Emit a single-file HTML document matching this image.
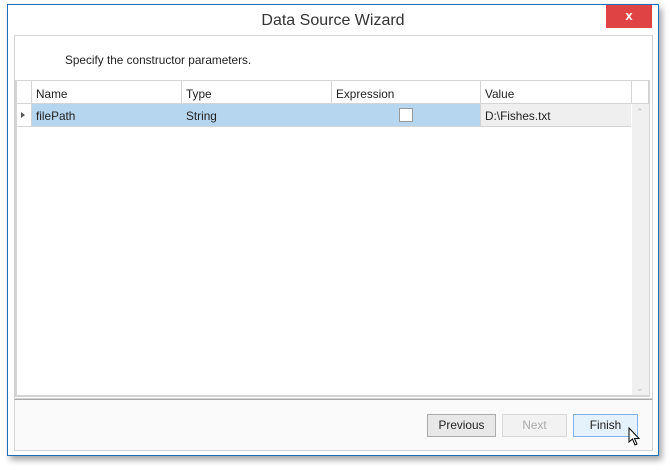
<!DOCTYPE html>
<html><head><style>
body{margin:0;width:670px;height:470px;background:#fff;position:relative;font-family:"Liberation Sans",sans-serif;overflow:hidden}
.win{position:absolute;left:7px;top:4px;width:650px;height:450px;border:1px solid #1c6fb8;background:#fff;box-shadow:3px 4px 6px rgba(0,0,0,.35)}
.a{position:absolute}
.t{font-size:11.8px;color:#222}
</style></head><body>
<div class="win">
 <div class="a" style="left:0;right:0;top:7px;text-align:center;font-size:16px;color:#333">Data Source Wizard</div>
 <div class="a" style="left:598px;top:0;width:46px;height:23px;background:#e04343;color:#fff;font-size:13px;font-weight:bold;text-align:center;line-height:22px">x</div>
 <div class="a" style="left:6px;top:30px;width:637px;height:362px;border:1px solid #d4d4d4;background:#fff"></div>
 <div class="a t" style="left:57px;top:48px">Specify the constructor parameters.</div>
 <div class="a" style="left:7px;top:75px;width:635px;height:317px;border:2px solid #d4d4d4;border-top:1px solid #d4d4d4;box-sizing:border-box"></div>
 <div class="a" style="left:9px;top:76px;width:632px;height:22px;border-bottom:1px solid #d4d4d4"></div>
 <div class="a" style="left:23px;top:76px;width:1px;height:45px;background:#d4d4d4"></div>
 <div class="a" style="left:173px;top:76px;width:1px;height:45px;background:#d4d4d4"></div>
 <div class="a" style="left:323px;top:76px;width:1px;height:45px;background:#d4d4d4"></div>
 <div class="a" style="left:472px;top:76px;width:1px;height:45px;background:#d4d4d4"></div>
 <div class="a" style="left:623px;top:76px;width:1px;height:22px;background:#d4d4d4"></div>
 <div class="a t" style="left:28px;top:82px">Name</div>
 <div class="a t" style="left:178px;top:82px">Type</div>
 <div class="a t" style="left:328px;top:82px">Expression</div>
 <div class="a t" style="left:477px;top:82px">Value</div>
 <div class="a" style="left:24px;top:99px;width:448px;height:22px;background:#b6d6ef"></div>
 <div class="a" style="left:473px;top:99px;width:150px;height:22px;background:#efefef"></div>
 <div class="a" style="left:624px;top:99px;width:17px;height:291px;background:#f0f0f0"></div>
 <div class="a" style="left:13px;top:107px;width:0;height:0;border-left:4px solid #555;border-top:3px solid transparent;border-bottom:3px solid transparent"></div>
 <div class="a" style="left:9px;top:121px;width:614px;height:1px;background:#d4d4d4"></div>
 <div class="a t" style="left:28px;top:104px">filePath</div>
 <div class="a t" style="left:178px;top:104px">String</div>
 <div class="a" style="left:391px;top:103px;width:12px;height:12px;border:1px solid #999;background:#fff"></div>
 <div class="a t" style="left:477px;top:104px">D:\Fishes.txt</div>
 <div class="a" style="left:628px;top:102px;font-size:9px;color:#bbb">&#8963;</div>
 <div class="a" style="left:628px;top:378px;font-size:9px;color:#bbb">&#8964;</div>
 <div class="a" style="left:6px;top:394px;width:637px;height:50px;border:1px solid #d4d4d4;border-top:1px solid #aaa;background:#fafafa"></div>
 <div class="a t" style="left:419px;top:409px;width:67px;height:21px;border:1px solid #acacac;background:#e8e8e8;text-align:center;line-height:21px">Previous</div>
 <div class="a t" style="left:494px;top:409px;width:63px;height:21px;border:1px solid #d8d8d8;background:#f2f2f2;text-align:center;line-height:21px;color:#aaa">Next</div>
 <div class="a t" style="left:565px;top:409px;width:63px;height:21px;border:1px solid #7eb4ea;background:#e5f1fb;text-align:center;line-height:21px">Finish</div>
 <svg class="a" style="left:620px;top:422px" width="14" height="20" viewBox="0 0 14 20"><path d="M1 1 L1 15 L4.5 12 L7 18 L9 17 L6.5 11.5 L11 11.5 Z" fill="#fff" stroke="#000" stroke-width="1"/></svg>
</div>
</body></html>
